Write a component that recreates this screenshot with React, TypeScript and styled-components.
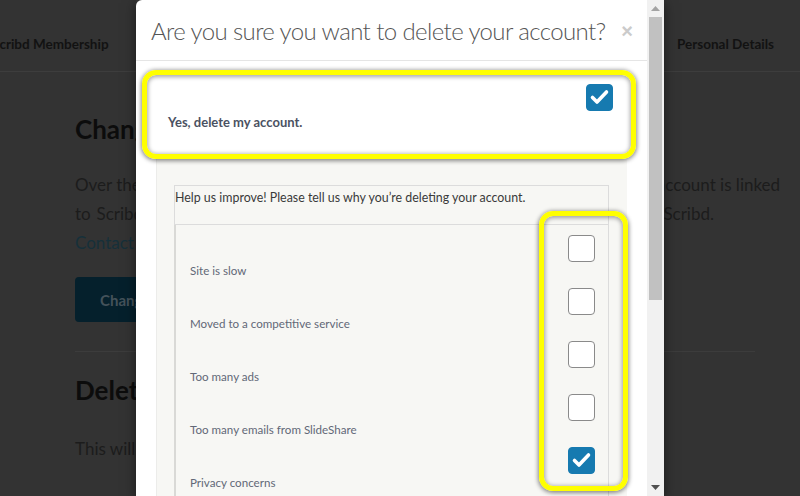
import React from 'react';
import styled, { createGlobalStyle } from 'styled-components';

const GlobalStyle = createGlobalStyle`
  html, body {
    margin: 0;
    padding: 0;
    height: 496px;
    overflow: hidden;
    background: #333;
    font-family: Lato, "Open Sans", "Liberation Sans", sans-serif;
  }
`;

const Page = styled.div`
  position: relative;
  width: 800px;
  height: 496px;
  overflow: hidden;
  background: #333;
`;

const NavBar = styled.div`
  display: flex;
  justify-content: space-between;
  align-items: flex-end;
  box-sizing: border-box;
  height: 72px;
  margin-left: -8px;
  width: 808px;
  padding: 0 26px 19px 0;
  border-bottom: 1px solid #3d3d3d;
`;

const NavItem = styled.span`
  font-size: 13.5px;
  font-weight: 700;
  line-height: 16px;
  color: #121212;
`;

const Main = styled.div`
  padding: 0 45px 0 75px;
`;

const Heading = styled.h2`
  margin: 41px 0 0;
  font-size: 26px;
  line-height: 32px;
  font-weight: 700;
  color: #0c0c0c;
`;

const Paragraph = styled.div`
  margin-top: 25px;
  font-size: 17px;
  line-height: 29px;
  color: #1c1c1c;
`;

const ParaLine = styled.div<{ $width?: number }>`
  width: ${(p) => (p.$width ? `${p.$width}px` : 'auto')};
  text-align-last: ${(p) => (p.$width ? 'justify' : 'auto')};
  white-space: nowrap;
`;

const PageLink = styled.span`
  color: #16303a;
`;

const PrimaryButton = styled.div`
  display: inline-flex;
  align-items: center;
  margin-top: 20px;
  height: 45px;
  padding: 0 25px;
  border-radius: 4px;
  background: #05202c;
  color: #44525a;
  font-size: 15px;
  font-weight: 700;
`;

const Divider = styled.div`
  margin-top: 29px;
  border-top: 1px solid #3c3c3c;
`;

const SecondHeading = styled(Heading)`
  margin-top: 22px;
`;

const SmallPara = styled(Paragraph)`
  margin-top: 28px;
`;

const Modal = styled.div`
  position: absolute;
  top: 0;
  left: 136px;
  width: 528px;
  height: 496px;
  display: flex;
  box-shadow: 0 3px 12px rgba(0, 0, 0, 0.5);
`;

const ModalPanel = styled.div`
  flex: 1;
  min-width: 0;
  background: #fff;
  border-radius: 6px 0 0 0;
  overflow: hidden;
`;

const ModalHeader = styled.div`
  display: flex;
  align-items: center;
  justify-content: space-between;
  height: 60px;
  padding: 0 14px 0 15px;
  border-bottom: 1px solid #e5e5e5;
`;

const ModalTitle = styled.h3`
  margin: 0;
  font-size: 24px;
  font-weight: 300;
  color: #555;
  letter-spacing: -0.6px;
  white-space: nowrap;
`;

const CloseButton = styled.span`
  font-family: "Liberation Sans", Arial, sans-serif;
  font-size: 20px;
  font-weight: 700;
  color: #cbcbcb;
  margin-top: 2px;
`;

const YesSection = styled.div`
  position: relative;
  margin: 14px 16px 0 11px;
  height: 79px;
  background: #fff;
  display: flex;
  flex-direction: column;
  align-items: flex-start;
  padding: 9px 18px 0 21px;
  box-sizing: border-box;
`;

const YesLabel = styled.span`
  margin-top: 3px;
  font-size: 13px;
  font-weight: 700;
  color: #4b5262;
`;

const Highlight = styled.div`
  position: absolute;
  border: 5px solid #ffff00;
  border-radius: 14px;
  box-shadow: 0 1px 4px 1px rgba(0, 0, 0, 0.45), inset 0 1px 4px 1px rgba(0, 0, 0, 0.35);
  pointer-events: none;
`;

const YesHighlight = styled(Highlight)`
  top: -5px;
  left: -5px;
  right: -5px;
  bottom: -5px;
`;

const ColumnHighlight = styled(Highlight)`
  top: 26px;
  left: 365px;
  width: 79px;
  height: 270px;
`;

const Box = styled.div<{ $checked?: boolean }>`
  width: 27px;
  height: 27px;
  box-sizing: border-box;
  border-radius: 4px;
  border: 1px solid ${(p) => (p.$checked ? '#167ab0' : '#8a8a8a')};
  background: ${(p) => (p.$checked ? '#167ab0' : '#fff')};
  display: flex;
  align-items: center;
  justify-content: center;
  flex-shrink: 0;
`;

const YesBox = styled(Box)`
  align-self: flex-end;
`;

const ReasonsPanel = styled.div`
  margin: 0 20px;
  padding: 31px 18px 0 17px;
  background: #f7f7f4;
  border-left: 1px solid #ececea;
  height: 400px;
`;

const ReasonsTable = styled.div`
  position: relative;
`;

const TableHead = styled.div`
  height: 40px;
  box-sizing: border-box;
  border: 1px solid #dcdcdc;
  padding: 3px 0 0 0;
  font-size: 12.4px;
  line-height: 17px;
  color: #3a3a3a;
  white-space: nowrap;
`;

const TableBody = styled.div`
  border-left: 2px solid #d9d9d6;
  border-right: 1px solid #dcdcdc;
  padding-top: 5px;
  height: 400px;
`;

const ReasonRow = styled.div`
  display: flex;
  justify-content: space-between;
  height: 53px;
  padding: 0 13px 0 14px;
`;

const ReasonLabel = styled.span`
  align-self: flex-end;
  padding-bottom: 4px;
  font-size: 11.6px;
  line-height: 16px;
  color: #626877;
`;

const RowBox = styled(Box)`
  margin-top: 5px;
`;

const Scrollbar = styled.div`
  width: 17px;
  background: #f1f1f1;
  display: flex;
  flex-direction: column;
`;

const ScrollArrow = styled.div`
  height: 17px;
  display: flex;
  align-items: center;
  justify-content: center;
`;

const ScrollThumb = styled.div`
  height: 283px;
  margin: 0 2px;
  background: #c1c1c1;
`;

const ScrollTrack = styled.div`
  flex: 1;
`;

const Check = () => (
  <svg width="21" height="21" viewBox="0 0 21 21">
    <path d="M3.5 10.5 L8 15 L17.5 5" fill="none" stroke="#fff" strokeWidth="3.6" strokeLinecap="round" strokeLinejoin="round" />
  </svg>
);

const Arrow: React.FC<{ up?: boolean; color: string }> = ({ up, color }) => (
  <svg width="9" height="5" viewBox="0 0 9 5">
    <path d={up ? 'M0 5 L4.5 0 L9 5 Z' : 'M0 0 L9 0 L4.5 5 Z'} fill={color} />
  </svg>
);

const reasons = [
  { label: 'Site is slow', checked: false },
  { label: 'Moved to a competitive service', checked: false },
  { label: 'Too many ads', checked: false },
  { label: 'Too many emails from SlideShare', checked: false },
  { label: 'Privacy concerns', checked: true },
  { label: 'Other', checked: false },
];

const App: React.FC = () => (
  <Page>
    <GlobalStyle />
    <NavBar>
      <NavItem>Scribd Membership</NavItem>
      <NavItem>Personal Details</NavItem>
    </NavBar>
    <Main>
      <Heading>Change Email or Password</Heading>
      <Paragraph>
        <ParaLine $width={673}>Over the past year, your SlideShare and Scribd accounts were merged, so your account is linked</ParaLine>
        <ParaLine $width={639}>to Scribd. To change your email address or password, please update them on Scribd.</ParaLine>
        <ParaLine>
          <PageLink>Contact us</PageLink> if you need any help.
        </ParaLine>
      </Paragraph>
      <PrimaryButton>Change on Scribd</PrimaryButton>
      <Divider />
      <SecondHeading>Delete Account</SecondHeading>
      <SmallPara>This will permanently delete your account and all of your content.</SmallPara>
      <SmallPara>Delete Account</SmallPara>
    </Main>

    <Modal>
      <ModalPanel>
        <ModalHeader>
          <ModalTitle>Are you sure you want to delete your account?</ModalTitle>
          <CloseButton>×</CloseButton>
        </ModalHeader>
        <YesSection>
          <YesBox $checked>
            <Check />
          </YesBox>
          <YesLabel>Yes, delete my account.</YesLabel>
          <YesHighlight />
        </YesSection>
        <ReasonsPanel>
          <ReasonsTable>
            <TableHead>Help us improve! Please tell us why you’re deleting your account.</TableHead>
            <TableBody>
              {reasons.map((r) => (
                <ReasonRow key={r.label}>
                  <ReasonLabel>{r.label}</ReasonLabel>
                  <RowBox $checked={r.checked}>{r.checked && <Check />}</RowBox>
                </ReasonRow>
              ))}
            </TableBody>
            <ColumnHighlight />
          </ReasonsTable>
        </ReasonsPanel>
      </ModalPanel>
      <Scrollbar>
        <ScrollArrow>
          <Arrow up color="#a3a3a3" />
        </ScrollArrow>
        <ScrollThumb />
        <ScrollTrack />
        <ScrollArrow>
          <Arrow color="#505050" />
        </ScrollArrow>
      </Scrollbar>
    </Modal>
  </Page>
);

export default App;
